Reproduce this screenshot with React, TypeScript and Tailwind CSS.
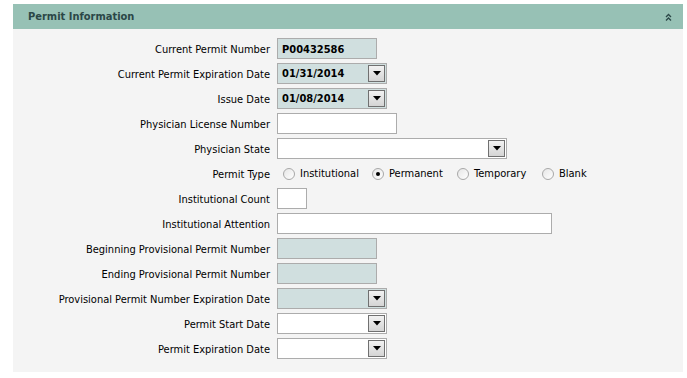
import React from 'react';

const FONT = { fontFamily: 'Tahoma, "DejaVu Sans Condensed", "Liberation Sans", sans-serif' };

function Label({ children }: { children: React.ReactNode }) {
  return <div className="h-[21px] text-right text-[11px] leading-[23px] text-black whitespace-nowrap">{children}</div>;
}

function TextBox({ width, value, shaded }: { width: string; value?: string; shaded?: boolean }) {
  return (
    <div
      className={`h-[21px] border border-[#acacac] ${width} ${shaded ? 'bg-[#d0dfdf]' : 'bg-white'} px-[4px] pt-[1px] text-[11px] font-bold leading-[19px] text-black`}
    >
      {value}
    </div>
  );
}

function Caret() {
  return (
    <div className="flex h-[17px] w-[17px] items-center justify-center border border-[#707070] bg-gradient-to-b from-[#f2f2f2] to-[#d4d4d4]">
      <svg width="8" height="5" viewBox="0 0 8 5">
        <path d="M0 0h8L4 4.5z" fill="#000" />
      </svg>
    </div>
  );
}

function Select({ width, value, shaded }: { width: string; value?: string; shaded?: boolean }) {
  return (
    <div
      className={`flex h-[21px] items-center justify-between border border-[#acacac] ${width} ${shaded ? 'bg-[#d0dfdf]' : 'bg-white'} pl-[4px] pr-[1px] text-[11px] font-bold text-black`}
    >
      <span className="pt-[2px]">{value}</span>
      <Caret />
    </div>
  );
}

function Radio({ label, checked }: { label: string; checked?: boolean }) {
  return (
    <label className="flex items-center gap-[5px] text-[11px] text-black">
      <span className="flex h-[12px] w-[12px] items-center justify-center rounded-full border border-[#a8a8a8] bg-gradient-to-br from-[#e6e6e6] to-white">
        {checked && <span className="h-[4px] w-[4px] rounded-full bg-black" />}
      </span>
      <span className="pt-[2px]">{label}</span>
    </label>
  );
}

export default function App() {
  const rows: [string, React.ReactNode][] = [
    ['Current Permit Number', <TextBox width="w-[100px]" value="P00432586" shaded />],
    ['Current Permit Expiration Date', <Select width="w-[110px]" value="01/31/2014" shaded />],
    ['Issue Date', <Select width="w-[110px]" value="01/08/2014" shaded />],
    ['Physician License Number', <TextBox width="w-[120px]" />],
    ['Physician State', <Select width="w-[230px]" />],
    [
      'Permit Type',
      <div className="flex h-[21px] items-center pl-[6px]">
        <div className="w-[89px]"><Radio label="Institutional" /></div>
        <div className="w-[85px]"><Radio label="Permanent" checked /></div>
        <div className="w-[85px]"><Radio label="Temporary" /></div>
        <Radio label="Blank" />
      </div>,
    ],
    ['Institutional Count', <TextBox width="w-[30px]" />],
    ['Institutional Attention', <TextBox width="w-[275px]" />],
    ['Beginning Provisional Permit Number', <TextBox width="w-[100px]" shaded />],
    ['Ending Provisional Permit Number', <TextBox width="w-[100px]" shaded />],
    ['Provisional Permit Number Expiration Date', <Select width="w-[110px]" shaded />],
    ['Permit Start Date', <Select width="w-[110px]" />],
    ['Permit Expiration Date', <Select width="w-[110px]" />],
  ];

  return (
    <div className="min-h-[378px] bg-white pt-[4px] pl-[13px] pr-[4px]" style={FONT}>
      <div className="w-[670px]">
        <div className="flex h-[25px] items-center justify-between bg-[#97c1b5] pl-[15px] pr-[11px]">
          <span className="pt-[2px] text-[11px] font-bold text-[#2b4747]">Permit Information</span>
          <svg width="7" height="8" viewBox="0 0 7 8">
            <path d="M1 4l2.5-2.5L6 4M1 7.5L3.5 5 6 7.5" fill="none" stroke="#2b4747" strokeWidth="1.3" />
          </svg>
        </div>
        <div className="grid grid-cols-[257px_1fr] gap-x-[7px] gap-y-[4px] bg-[#f4f4f4] pt-[9px] pb-[13px]">
          {rows.map(([label, field]) => (
            <React.Fragment key={label}>
              <Label>{label}</Label>
              <div>{field}</div>
            </React.Fragment>
          ))}
        </div>
      </div>
    </div>
  );
}
